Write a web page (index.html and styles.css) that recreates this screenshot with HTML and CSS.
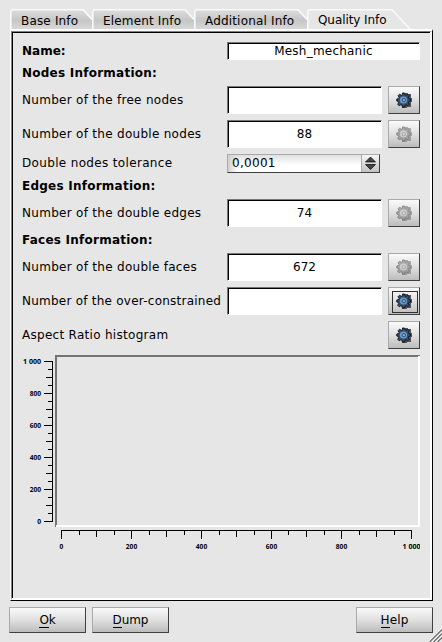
FILE: index.html
```html
<!DOCTYPE html>
<html lang="en">
<head>
<meta charset="utf-8">
<title>Mesh Information</title>
<link rel="stylesheet" href="styles.css">
</head>
<body>
<svg class="defs" width="0" height="0">
  <defs>
    <linearGradient id="tabfill" x1="0" y1="0" x2="0" y2="1"><stop offset="0" stop-color="#dcdcdc"/><stop offset=".55" stop-color="#c6c6c6"/><stop offset="1" stop-color="#d8d8d8"/></linearGradient>
    <symbol id="gear" viewBox="0 0 16 16">
      <path class="gear-shade" d="M9 1h3v1h3v4h1v4h-1v5h-4v1H6v-2z"/>
      <path class="gear-body" d="M6.5 1h2l.4 1.8 1.3.5 1.6-1.1 1.5 1.5-1 1.6.5 1.3 1.8.4v2l-1.8.4-.5 1.3 1 1.6-1.5 1.5-1.6-1-1.3.5-.4 1.8h-2l-.4-1.8-1.3-.5-1.6 1-1.5-1.5 1-1.6-.5-1.3L.8 9V7l1.8-.4.5-1.3-1-1.6 1.5-1.5 1.6 1.1 1.3-.5z"/>
      <circle class="gear-ring" cx="7.5" cy="8" r="3.6"/>
      <circle class="gear-hole" cx="7.8" cy="8.1" r="1.7"/>
    </symbol>
  </defs>
</svg>
<main class="dialog">
  <nav class="tabs">
    <div class="tab t1"><svg viewBox="0 0 82 20" width="82" height="20"><path class="fill" d="M1 20V1H73L82 11V20z"/><path class="edge" d="M.8 20V2L2 .8H73L82 10.5"/></svg><span>Base Info</span></div>
    <div class="tab t2"><svg viewBox="0 0 102 20" width="102" height="20"><path class="fill" d="M1 20V1H93L102 11V20z"/><path class="edge" d="M.8 20V2L2 .8H93L102 10.5"/></svg><span>Element Info</span></div>
    <div class="tab t3"><svg viewBox="0 0 113 20" width="113" height="20"><path class="fill" d="M1 20V1H104L113 11V20z"/><path class="edge" d="M.8 20V2L2 .8H104L113 10.5"/></svg><span>Additional Info</span></div>
    <div class="tab t4 active"><svg viewBox="0 0 104 20" width="104" height="20"><path class="edge" d="M.8 20V2L2 .8H85L103 20"/></svg><span>Quality Info</span></div>
  </nav>
  <section class="panel"><div class="inner">
    <div class="row name"><b>Name:</b><div class="field wide"><span>Mesh_mechanic</span></div></div>
    <div class="row title"><b>Nodes Information:</b></div>
    <div class="row"><label>Number of the free nodes</label><div class="field"></div><button class="tool"><svg class="gear"><use href="#gear"/></svg></button></div>
    <div class="row"><label>Number of the double nodes</label><div class="field">88</div><button class="tool off"><svg class="gear"><use href="#gear"/></svg></button></div>
    <div class="row spinrow"><label>Double nodes tolerance</label><div class="spin"><span>0,0001</span><div class="arrows"><svg width="17" height="17" viewBox="0 0 17 17"><path d="M3.5 7L8.5 2 13.5 7zM3.5 9.5h10L8.5 14.5z"/></svg></div></div></div>
    <div class="row title"><b>Edges Information:</b></div>
    <div class="row"><label>Number of the double edges</label><div class="field">74</div><button class="tool off"><svg class="gear"><use href="#gear"/></svg></button></div>
    <div class="row title"><b>Faces Information:</b></div>
    <div class="row"><label>Number of the double faces</label><div class="field">672</div><button class="tool off"><svg class="gear"><use href="#gear"/></svg></button></div>
    <div class="row"><label class="long">Number of the over-constrained</label><div class="field"></div><button class="tool focus"><svg class="gear"><use href="#gear"/></svg></button></div>
    <div class="row"><label>Aspect Ratio histogram</label><i></i><button class="tool"><svg class="gear"><use href="#gear"/></svg></button></div>
    <svg class="plot" width="398" height="200" viewBox="0 0 398 200">
      <path class="dark" d="M33 172V0H398V2H35V172z"/>
      <path class="light" d="M34 172V170H396V1H398V172z"/>
      <path class="axis" d="M30.5 6V167
        M22 6.5h9M26 14.5h5M24 22.5h7M26 30.5h5M22 38.5h9M26 46.5h5M24 54.5h7M26 62.5h5M22 70.5h9M26 78.5h5M24 86.5h7M26 94.5h5M22 102.5h9M26 110.5h5M24 118.5h7M26 126.5h5M22 134.5h9M26 142.5h5M24 150.5h7M26 158.5h5M22 166.5h9
        M39 175.5H390
        M39.5 175v9M57.5 175v5M74.5 175v7M92.5 175v5M109.5 175v9M127.5 175v5M144.5 175v7M162.5 175v5M179.5 175v9M197.5 175v5M214.5 175v7M232.5 175v5M249.5 175v9M266.5 175v5M284.5 175v7M302.5 175v5M319.5 175v9M337.5 175v5M354.5 175v7M372.5 175v5M389.5 175v9"/>
      <g class="ylab"><text x="19" y="9" textLength="18" lengthAdjust="spacingAndGlyphs">1 000</text><text x="19" y="41">800</text><text x="19" y="73">600</text><text x="19" y="105">400</text><text x="19" y="137">200</text><text x="19" y="169">0</text></g>
      <g class="xlab"><text x="39.5" y="194">0</text><text x="109.5" y="194">200</text><text x="179.5" y="194">400</text><text x="249.5" y="194">600</text><text x="319.5" y="194">800</text><text x="389.5" y="194" textLength="18" lengthAdjust="spacingAndGlyphs">1 000</text></g>
    </svg>
  </div></section>
  <footer class="buttons">
    <button class="push"><span><u>O</u>k</span></button>
    <button class="push"><span><u>D</u>ump</span></button>
    <button class="push help"><span><u>H</u>elp</span></button>
  </footer>
  <svg class="grip" width="14" height="14" viewBox="0 0 14 14"><path class="g-light" d="M0 14L14 0M4 14L14 4M8 14L14 8"/><path class="g-dark" d="M1.5 14L14 1.5M5.5 14L14 5.5M9.5 14L14 9.5"/></svg>
</main>
</body>
</html>
```
FILE: styles.css
```css
* { box-sizing: border-box; }
body { margin: 0; background: #e6e6e6; color: #000; font: 12px/14px "DejaVu Sans", sans-serif; }
.defs { position: absolute; }
.dialog { position: relative; width: 442px; height: 642px; padding: 9px 9px 9px 10px; overflow: hidden; }
.tabs { display: flex; height: 20px; }
.tab { position: relative; height: 20px; padding: 5px 0 0 11px; white-space: nowrap; letter-spacing: .17px; }
.tab svg { position: absolute; left: 0; top: 0; }
.tab span { position: relative; }
.tab .fill { fill: url(#tabfill); }
.tab .edge { fill: none; stroke: #fafafa; stroke-width: 1.6; }
.t1 { width: 82px; }
.t2 { width: 102px; }
.t3 { width: 113px; }
.t4 { width: 104px; }
.active { padding-top: 4px; letter-spacing: -.08px; }
.panel { height: 572px; border: 1px solid #fff; border-right-color: #000; border-bottom-color: #000; border-top-width: 2px; }
.inner { height: 569px; padding: 10px 0 0 10px; border: solid; border-width: 1px 2px 2px 1px; border-color: #808080 #fff #fff #808080; box-shadow: inset 1px 1px 0 #000; display: flex; flex-direction: column; gap: 6px; }
.row { display: grid; grid-template-columns: 205px 155px 32px; height: 28px; align-items: center; flex: none; white-space: nowrap; }
.row label { letter-spacing: .29px; }
.row .long { letter-spacing: .24px; }
.row .tool { margin-left: 6px; }
.name { height: 18px; }
.title { height: 14px; letter-spacing: .24px; }
.spinrow { height: 19px; }
.spinrow label { padding-bottom: 2px; letter-spacing: .34px; }
.field { height: 28px; display: flex; align-items: center; justify-content: center; background: #fff; border: 1px solid; border-color: #777 #fff #fff #777; box-shadow: inset 1px 1px 0 #000; }
.wide { width: 193px; height: 18px; padding-bottom: 1px; letter-spacing: .22px; }
.spin { display: flex; width: 153px; height: 19px; border: 1px solid; border-color: #aaa #404040 #404040 #aaa; background: linear-gradient(90deg, #d0d0d0, transparent 10px), linear-gradient(#e0e0e0, #fff 10px); }
.spin span { flex: 1; padding: 1px 0 0 4px; letter-spacing: .3px; }
.arrows { width: 18px; border-left: 1px solid #aaa; background: linear-gradient(#f6f6f6, #c2c2c2); }
.arrows path { fill: #444; stroke: #000; stroke-width: .7; }
.tool, .push { font: inherit; color: #000; border: 1px solid; border-color: #aaa #404040 #404040 #aaa; background: linear-gradient(#fafafa, #e0e0e0 50%, #bcbcbc); padding: 0; display: flex; align-items: center; justify-content: center; }
.tool { position: relative; width: 32px; height: 28px; }
.gear { width: 16px; height: 16px; }
.gear-shade { fill: #333; opacity: .8; }
.gear-body { fill: #35506e; stroke: #10161d; stroke-width: 1; }
.gear-ring { fill: #5f9de0; }
.gear-hole { fill: #a9a499; stroke: #33475e; stroke-width: .9; }
.off .gear { filter: grayscale(1) brightness(1.25); opacity: .45; }
.focus::after { content: ""; position: absolute; left: 3px; top: 3px; width: 24px; height: 20px; border: 1px solid #303030; }
.plot { display: block; flex: none; }
.plot .dark { fill: #747474; }
.plot .light { fill: #fff; }
.plot .axis { fill: none; stroke: #000; shape-rendering: crispEdges; }
.plot text { font: bold 6.6px "Open Sans", sans-serif; }
.ylab { text-anchor: end; }
.xlab { text-anchor: middle; }
.buttons { display: flex; gap: 6px; margin: 6px 0 0 -1px; }
.push { width: 77px; height: 26px; letter-spacing: -.1px; }
.push u { text-decoration: none; border-bottom: 1px solid #000; }
.help { margin-left: auto; letter-spacing: .1px; }
.grip { position: absolute; right: 0; bottom: 0; fill: none; }
.g-light { stroke: #fff; }
.g-dark { stroke: #707070; stroke-width: 1.3; }
```
